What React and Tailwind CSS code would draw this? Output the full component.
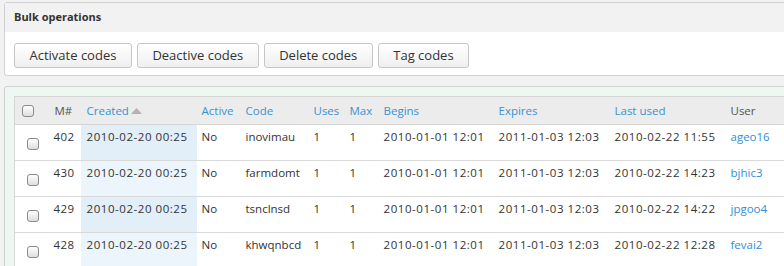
const rows = [
  { id: 402, created: '2010-02-20 00:25', active: 'No', code: 'inovimau', uses: 1, max: 1, begins: '2010-01-01 12:01', expires: '2011-01-03 12:03', last: '2010-02-22 11:55', user: 'ageo16' },
  { id: 430, created: '2010-02-20 00:25', active: 'No', code: 'farmdomt', uses: 1, max: 1, begins: '2010-01-01 12:01', expires: '2011-01-03 12:03', last: '2010-02-22 14:23', user: 'bjhic3' },
  { id: 429, created: '2010-02-20 00:25', active: 'No', code: 'tsnclnsd', uses: 1, max: 1, begins: '2010-01-01 12:01', expires: '2011-01-03 12:03', last: '2010-02-22 14:22', user: 'jpgoo4' },
  { id: 428, created: '2010-02-20 00:25', active: 'No', code: 'khwqnbcd', uses: 1, max: 1, begins: '2010-01-01 12:01', expires: '2011-01-03 12:03', last: '2010-02-22 12:28', user: 'fevai2' },
]

function Checkbox() {
  return (
    <span className="block w-[12px] h-[12px] rounded-[3px] border border-[#8a8a8a] bg-gradient-to-b from-white to-[#dedede]" />
  )
}

function Button({ children }) {
  return (
    <button className="h-[25px] px-[14.5px] rounded-[3px] border border-[#c6c6c6] bg-gradient-to-b from-white to-[#efefef] text-[13px] text-[#333]">
      {children}
    </button>
  )
}

export default function App() {
  return (
    <div
      className="w-[784px] h-[266px] overflow-hidden bg-[#f2f2f2] pt-[2px] pl-[4px]"
      style={{ fontFamily: '"Open Sans", sans-serif' }}
    >
      {/* bulk operations */}
      <div className="w-[860px] border border-[#d0d0d0] rounded-[3px] bg-white">
        <div className="h-[29px] bg-[#f2f2f2] px-[9px] flex items-center text-[11px] font-bold text-[#333]">
          Bulk operations
        </div>
        <div className="flex gap-[5px] px-[9px] pt-[11px] pb-[7px]">
          <Button>Activate codes</Button>
          <Button>Deactive codes</Button>
          <Button>Delete codes</Button>
          <Button>Tag codes</Button>
        </div>
      </div>

      {/* codes table */}
      <div className="w-[860px] mt-[10px] border border-[#d0d0d0] rounded-[3px] bg-[#eff7f3] p-[9px]">
        <table className="table-fixed border-collapse bg-white text-[11.5px] text-[#333] w-[820px]">
          <colgroup>
            <col className="w-[33px]" />
            <col className="w-[33px]" />
            <col className="w-[116px]" />
            <col className="w-[44px]" />
            <col className="w-[68px]" />
            <col className="w-[36px]" />
            <col className="w-[34px]" />
            <col className="w-[115px]" />
            <col className="w-[116px]" />
            <col className="w-[116px]" />
            <col className="w-[109px]" />
          </colgroup>
          <thead>
            <tr className="h-[28px] bg-[#ececec] border border-[#d5d5d5] text-left">
              <th className="pl-[7px] font-normal"><Checkbox /></th>
              <th className="pl-[7px] font-normal text-[#555]">M#</th>
              <th className="pl-[6px] font-normal text-[#3a92d2]">
                <span className="inline-flex items-center gap-[2px]">
                  Created
                  <svg width="11" height="6" viewBox="0 0 11 6"><path d="M0 6 L5.5 0 L11 6 Z" fill="#b3b3b3" /></svg>
                </span>
              </th>
              <th className="pl-[5px] font-normal text-[#3a92d2]">Active</th>
              <th className="pl-[5px] font-normal text-[#3a92d2]">Code</th>
              <th className="pl-[5px] font-normal text-[#3a92d2]">Uses</th>
              <th className="pl-[5px] font-normal text-[#3a92d2]">Max</th>
              <th className="pl-[5px] font-normal text-[#3a92d2]">Begins</th>
              <th className="pl-[5px] font-normal text-[#3a92d2]">Expires</th>
              <th className="pl-[5px] font-normal text-[#3a92d2]">Last used</th>
              <th className="pl-[5px] font-normal text-[#555]">User</th>
            </tr>
          </thead>
          <tbody>
            {rows.map((r, i) => (
              <tr key={r.id} className="h-[36px] border border-[#d9d9d9] align-top">
                <td className="pl-[12px] pt-[13px]"><Checkbox /></td>
                <td className="pr-[6px] pt-[3px] text-right tracking-[0.4px]">{r.id}</td>
                <td className={`pl-[6px] pt-[3px] tracking-[0.55px] ${i % 2 === 0 ? 'bg-[#e2eef8]' : 'bg-[#ebf5fb]'}`}>{r.created}</td>
                <td className="pl-[5px] pt-[3px]">{r.active}</td>
                <td className="pl-[5px] pt-[3px]">{r.code}</td>
                <td className="pl-[5px] pt-[3px]">{r.uses}</td>
                <td className="pl-[5px] pt-[3px]">{r.max}</td>
                <td className="pl-[5px] pt-[3px] tracking-[0.55px]">{r.begins}</td>
                <td className="pl-[5px] pt-[3px] tracking-[0.55px]">{r.expires}</td>
                <td className="pl-[5px] pt-[3px] tracking-[0.55px]">{r.last}</td>
                <td className="pl-[5px] pt-[3px] text-[#2f8fd6]">{r.user}</td>
              </tr>
            ))}
          </tbody>
        </table>
      </div>
    </div>
  )
}
